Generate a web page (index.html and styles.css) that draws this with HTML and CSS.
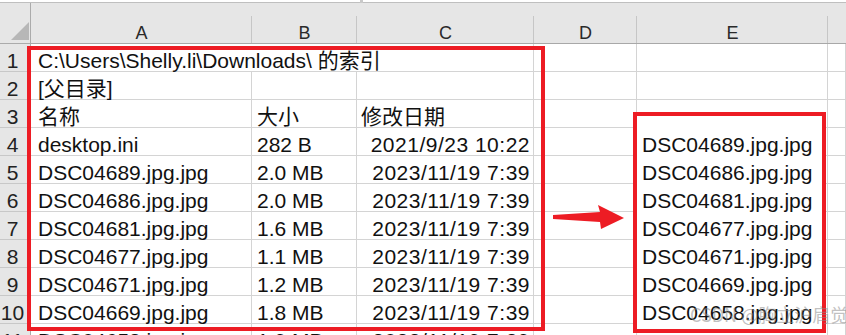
FILE: index.html
```html
<!DOCTYPE html>
<html lang="zh-CN">
<head>
<meta charset="utf-8">
<title>Sheet</title>
<link rel="stylesheet" href="styles.css">
</head>
<body>
<div class="sheet">
  <div class="topbar"><div class="tb-seg tb-left"></div><div class="tb-gap"></div><div class="tb-seg tb-right"></div></div>
  <div class="grid">
    <div class="corner"><svg width="31" height="40" viewBox="0 0 31 40"><polygon points="29,19 29,37 11,37" fill="#b7b7b7"/></svg></div>
    <div class="colhead">A</div>
    <div class="colhead">B</div>
    <div class="colhead">C</div>
    <div class="colhead">D</div>
    <div class="colhead">E</div>
    <div class="colhead last"></div>

    <div class="rowhead">1</div>
    <div class="cell a span3">C:\Users\Shelly.li\Downloads\ 的索引</div>
    <div class="cell"></div><div class="cell"></div><div class="cell"></div>

    <div class="rowhead">2</div>
    <div class="cell a">[父目录]</div><div class="cell"></div><div class="cell"></div>
    <div class="cell"></div><div class="cell"></div><div class="cell"></div>

    <div class="rowhead">3</div>
    <div class="cell a">名称</div><div class="cell b">大小</div><div class="cell c">修改日期</div>
    <div class="cell"></div><div class="cell"></div><div class="cell"></div>

    <div class="rowhead">4</div>
    <div class="cell a">desktop.ini</div><div class="cell b">282 B</div><div class="cell c r">2021/9/23 10:22</div>
    <div class="cell"></div><div class="cell"></div><div class="cell"></div>

    <div class="rowhead">5</div>
    <div class="cell a">DSC04689.jpg.jpg</div><div class="cell b">2.0 MB</div><div class="cell c r">2023/11/19 7:39</div>
    <div class="cell"></div><div class="cell"></div><div class="cell"></div>

    <div class="rowhead">6</div>
    <div class="cell a">DSC04686.jpg.jpg</div><div class="cell b">2.0 MB</div><div class="cell c r">2023/11/19 7:39</div>
    <div class="cell"></div><div class="cell"></div><div class="cell"></div>

    <div class="rowhead">7</div>
    <div class="cell a">DSC04681.jpg.jpg</div><div class="cell b">1.6 MB</div><div class="cell c r">2023/11/19 7:39</div>
    <div class="cell"></div><div class="cell"></div><div class="cell"></div>

    <div class="rowhead">8</div>
    <div class="cell a">DSC04677.jpg.jpg</div><div class="cell b">1.1 MB</div><div class="cell c r">2023/11/19 7:39</div>
    <div class="cell"></div><div class="cell"></div><div class="cell"></div>

    <div class="rowhead">9</div>
    <div class="cell a">DSC04671.jpg.jpg</div><div class="cell b">1.2 MB</div><div class="cell c r">2023/11/19 7:39</div>
    <div class="cell"></div><div class="cell"></div><div class="cell"></div>

    <div class="rowhead">10</div>
    <div class="cell a">DSC04669.jpg.jpg</div><div class="cell b">1.8 MB</div><div class="cell c r">2023/11/19 7:39</div>
    <div class="cell"></div><div class="cell"></div><div class="cell"></div>

    <div class="rowhead">11</div>
    <div class="cell a">DSC04658.jpg.jpg</div><div class="cell b">1.9 MB</div><div class="cell c r">2023/11/19 7:39</div>
    <div class="cell"></div><div class="cell"></div><div class="cell"></div>
  </div>

  <div class="redbox box-left"></div>
  <div class="redbox box-right">
    <div class="pline">DSC04689.jpg.jpg</div>
    <div class="pline">DSC04686.jpg.jpg</div>
    <div class="pline">DSC04681.jpg.jpg</div>
    <div class="pline">DSC04677.jpg.jpg</div>
    <div class="pline">DSC04671.jpg.jpg</div>
    <div class="pline">DSC04669.jpg.jpg</div>
    <div class="pline">DSC04658.jpg.jpg</div>
  </div>
  <svg class="arrow" width="80" height="36" viewBox="0 0 80 36"><polygon points="3,15 50,12 48,5 74,18 51,29 50,22 3,19" fill="#ed1c24"/></svg>
  <div class="watermark">CSDN @胸立沪肩觉</div>
</div>
</body>
</html>
```
FILE: styles.css
```css
* { box-sizing: border-box; }
html, body { margin: 0; padding: 0; background: #fff; }
body { width: 846px; height: 335px; overflow: hidden; }

.sheet {
  position: relative;
  width: 846px;
  height: 335px;
  overflow: hidden;
  font-family: "Liberation Sans", "Noto Sans CJK SC", sans-serif;
  color: #111;
}

.topbar { display: flex; height: 3px; }
.tb-seg { background: #fff; border-bottom: 1px solid #bfbfbf; height: 3px; }
.tb-left { width: 360px; }
.tb-gap { width: 3px; background: #c9c9c9; }
.tb-right { flex: 1; }

.grid {
  display: grid;
  grid-template-columns: 31px 221px 105px 177px 103px 191px 18px;
  grid-template-rows: 41px repeat(11, 28px);
}

.corner {
  background: #e6e6e6;
  border-right: 1px solid #ababab;
  border-bottom: 1px solid #ababab;
}
.corner svg { display: block; }

.colhead {
  background: linear-gradient(#c6c6c6, #c6c6c6) right bottom / 1px 27px no-repeat, #e6e6e6;
  border-bottom: 1px solid #a8a8a8;
  text-align: center;
  font-size: 18px;
  line-height: 18px;
  padding-top: 21px;
  color: #2a2a2a;
}
.colhead.last { background: #e6e6e6; }

.rowhead {
  background: #e6e6e6;
  border-right: 1px solid #ababab;
  border-bottom: 1px solid #c8c8c8;
  text-align: center;
  font-size: 21px;
  line-height: 23px;
  padding-top: 5px;
  padding-right: 5px;
  color: #222;
  overflow: hidden;
}

.cell {
  border-right: 1px solid #d4d4d4;
  border-bottom: 1px solid #d4d4d4;
  font-size: 21px;
  line-height: 23px;
  padding-top: 5px;
  white-space: nowrap;
}
.cell.a { padding-left: 7px; }
.cell.b { padding-left: 5px; }
.cell.c { padding-left: 4px; }
.cell.r { text-align: right; padding-right: 3px; letter-spacing: 0.5px; }
.cell.span3 { grid-column: span 3; }

.redbox {
  position: absolute;
  border: 4px solid #ed1c24;
}
.box-left { left: 27px; top: 46px; width: 518px; height: 285px; }
.box-right {
  left: 633px; top: 112px; width: 193px; height: 221px;
  background: #fff;
  padding: 12px 0 0 5px;
}
.pline {
  height: 28px;
  font-size: 21px;
  line-height: 23px;
  padding-top: 5px;
  white-space: nowrap;
}

.arrow { position: absolute; left: 550px; top: 200px; }

.watermark {
  position: absolute;
  left: 690px;
  top: 303px;
  font-family: "Noto Sans CJK SC", sans-serif;
  font-size: 18px;
  line-height: 22px;
  color: rgba(140, 140, 140, 0.55);
  white-space: nowrap;
}
```
